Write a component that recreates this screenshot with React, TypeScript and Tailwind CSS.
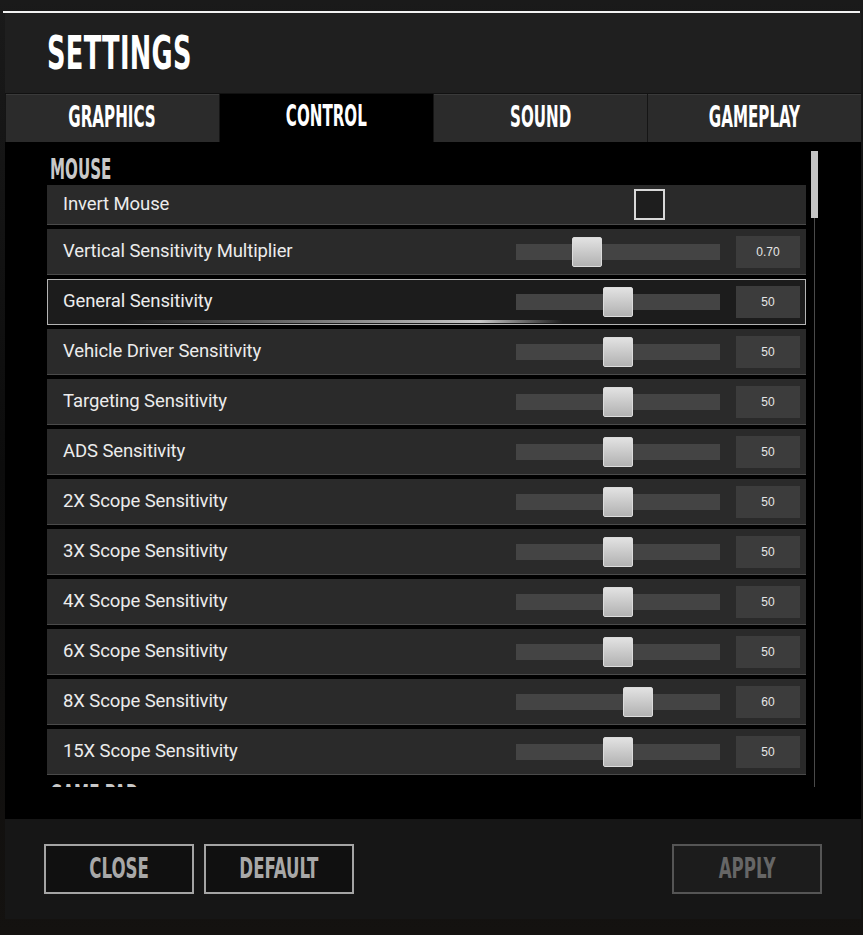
import React from 'react';

const display = { fontFamily: '"DejaVu Sans Condensed", "DejaVu Sans", sans-serif' };
const label = { fontFamily: 'Roboto, "Noto Sans", sans-serif' };

interface SliderRow {
  name: string;
  value: string;
  pos: number;
  hover?: boolean;
}

const rows: SliderRow[] = [
  { name: 'Vertical Sensitivity Multiplier', value: '0.70', pos: 0.322 },
  { name: 'General Sensitivity', value: '50', pos: 0.5, hover: true },
  { name: 'Vehicle Driver Sensitivity', value: '50', pos: 0.5 },
  { name: 'Targeting Sensitivity', value: '50', pos: 0.5 },
  { name: 'ADS Sensitivity', value: '50', pos: 0.5 },
  { name: '2X Scope Sensitivity', value: '50', pos: 0.5 },
  { name: '3X Scope Sensitivity', value: '50', pos: 0.5 },
  { name: '4X Scope Sensitivity', value: '50', pos: 0.5 },
  { name: '6X Scope Sensitivity', value: '50', pos: 0.5 },
  { name: '8X Scope Sensitivity', value: '60', pos: 0.615 },
  { name: '15X Scope Sensitivity', value: '50', pos: 0.5 },
];

const tabs = ['GRAPHICS', 'CONTROL', 'SOUND', 'GAMEPLAY'];

const Condensed: React.FC<{ children: React.ReactNode; className?: string }> = ({ children, className = '' }) => (
  <span style={display} className={`inline-block font-bold ${className}`}>
    {children}
  </span>
);

const Slider: React.FC<{ pos: number }> = ({ pos }) => (
  <div className="relative w-[204px] h-[30px] flex items-center">
    <div className="w-full h-[16px] bg-[#444444]" />
    <div
      className="absolute top-0 w-[30px] h-[30px] rounded-[2px] border border-[#dcdcdc] bg-gradient-to-b from-[#e2e2e2] to-[#b2b2b2]"
      style={{ left: `${pos * 174}px` }}
    />
  </div>
);

const Row: React.FC<{ row: SliderRow }> = ({ row }) => (
  <div
    className={`relative h-[46px] flex items-center ${
      row.hover
        ? 'bg-[#1c1c1c] border border-[#b4b4b4] pl-[15px] pr-[5px]'
        : 'bg-[#2a2a2a] border-b border-[#4a4a4a] pl-[16px] pr-[6px]'
    }`}
  >
    <span style={label} className="flex-1 text-[18.5px] tracking-[-0.1px] text-[#ececec]">
      {row.name}
    </span>
    <Slider pos={row.pos} />
    <div
      className="ml-[16px] w-[64px] h-[32px] bg-[#3c3c3c] flex items-center justify-center text-[12px] text-[#e6e6e6]"
      style={{ fontFamily: '"Liberation Sans", Arial, sans-serif' }}
    >
      {row.value}
    </div>
    {row.hover && (
      <div className="absolute left-0 right-0 bottom-[1px] h-[3px] bg-gradient-to-r from-transparent from-10% via-[#c8c8c8] via-57% to-transparent to-68%" />
    )}
  </div>
);

export default function App() {
  return (
    <div className="w-[863px] h-[935px] overflow-hidden bg-[#121212] bg-gradient-to-b from-[#1a1a1a] via-[#0c0c0c] to-[#141210] relative">
      {/* top line */}
      <div className="h-[11px]" />
      <div className="mx-[3px] h-[2px] bg-[#f2f2f2]" />
      <div className="ml-[5px] mr-[2px]">
        {/* header */}
        <div className="h-[81px] bg-[#1f1f1f] flex items-center pl-[42px] border-b border-[#111]">
          <Condensed className="text-[46px] leading-none text-white origin-left scale-x-[0.62] tracking-[0.5px]">
            SETTINGS
          </Condensed>
        </div>
        {/* tabs */}
        <div className="h-[48px] flex gap-[1px] bg-[#151515]">
          {tabs.map((t, i) => (
            <div
              key={t}
              className={`flex-1 flex items-center justify-center pb-[4px] ${
                i === 1 ? 'bg-black' : 'bg-[#2b2b2b] border-t border-[#3a3a3a]'
              } ${i === 0 ? 'ml-[1px]' : ''}`}
            >
              <Condensed className="text-[30px] leading-none text-white scale-x-[0.56]">{t}</Condensed>
            </div>
          ))}
        </div>
        {/* content */}
        <div className="h-[677px] bg-black pt-[9px] relative">
          <div className="flex">
            <div className="w-[759px] ml-[42px] h-[636px] overflow-hidden">
              <div className="h-[34px] pl-[3px] pt-[5px]">
                <Condensed className="text-[28px] leading-none text-[#c8c8c8] origin-left scale-x-[0.6]">MOUSE</Condensed>
              </div>
              <div className="flex flex-col gap-[4px]">
                <div className="h-[40px] bg-[#2a2a2a] border-b border-[#4a4a4a] flex items-center pl-[16px]">
                  <span style={label} className="w-[571px] text-[18.5px] tracking-[-0.1px] text-[#ececec]">
                    Invert Mouse
                  </span>
                  <div className="w-[31px] h-[31px] border-2 border-[#d8d8d8] bg-[#1e1e1e]" />
                </div>
                {rows.map((r) => (
                  <Row key={r.name} row={r} />
                ))}
              </div>
              <div className="h-[35px] pl-[3px] pt-[7px]">
                <Condensed className="text-[28px] leading-none text-[#c8c8c8] origin-left scale-x-[0.6]">GAME PAD</Condensed>
              </div>
            </div>
            {/* scrollbar */}
            <div className="ml-[5px] w-[7px] h-[636px] flex flex-col items-center">
              <div className="w-[7px] h-[67px] bg-[#c4c4c4]" />
              <div className="w-[1px] flex-1 bg-[#4a4a4a]" />
            </div>
          </div>
        </div>
        {/* footer */}
        <div className="h-[100px] bg-[#161616] flex items-center pl-[39px] pr-[39px]">
          <button className="w-[150px] h-[50px] border-2 border-[#a4a4a4] bg-[#101010] flex items-center justify-center">
            <Condensed className="text-[28px] leading-none text-[#a8a8a8] scale-x-[0.66]">CLOSE</Condensed>
          </button>
          <button className="ml-[10px] w-[150px] h-[50px] border-2 border-[#a4a4a4] bg-[#101010] flex items-center justify-center">
            <Condensed className="text-[28px] leading-none text-[#a8a8a8] scale-x-[0.66]">DEFAULT</Condensed>
          </button>
          <button className="ml-auto w-[150px] h-[50px] border-2 border-[#555555] bg-[#1c1c1c] flex items-center justify-center">
            <Condensed className="text-[28px] leading-none text-[#666666] scale-x-[0.66]">APPLY</Condensed>
          </button>
        </div>
      </div>
    </div>
  );
}
